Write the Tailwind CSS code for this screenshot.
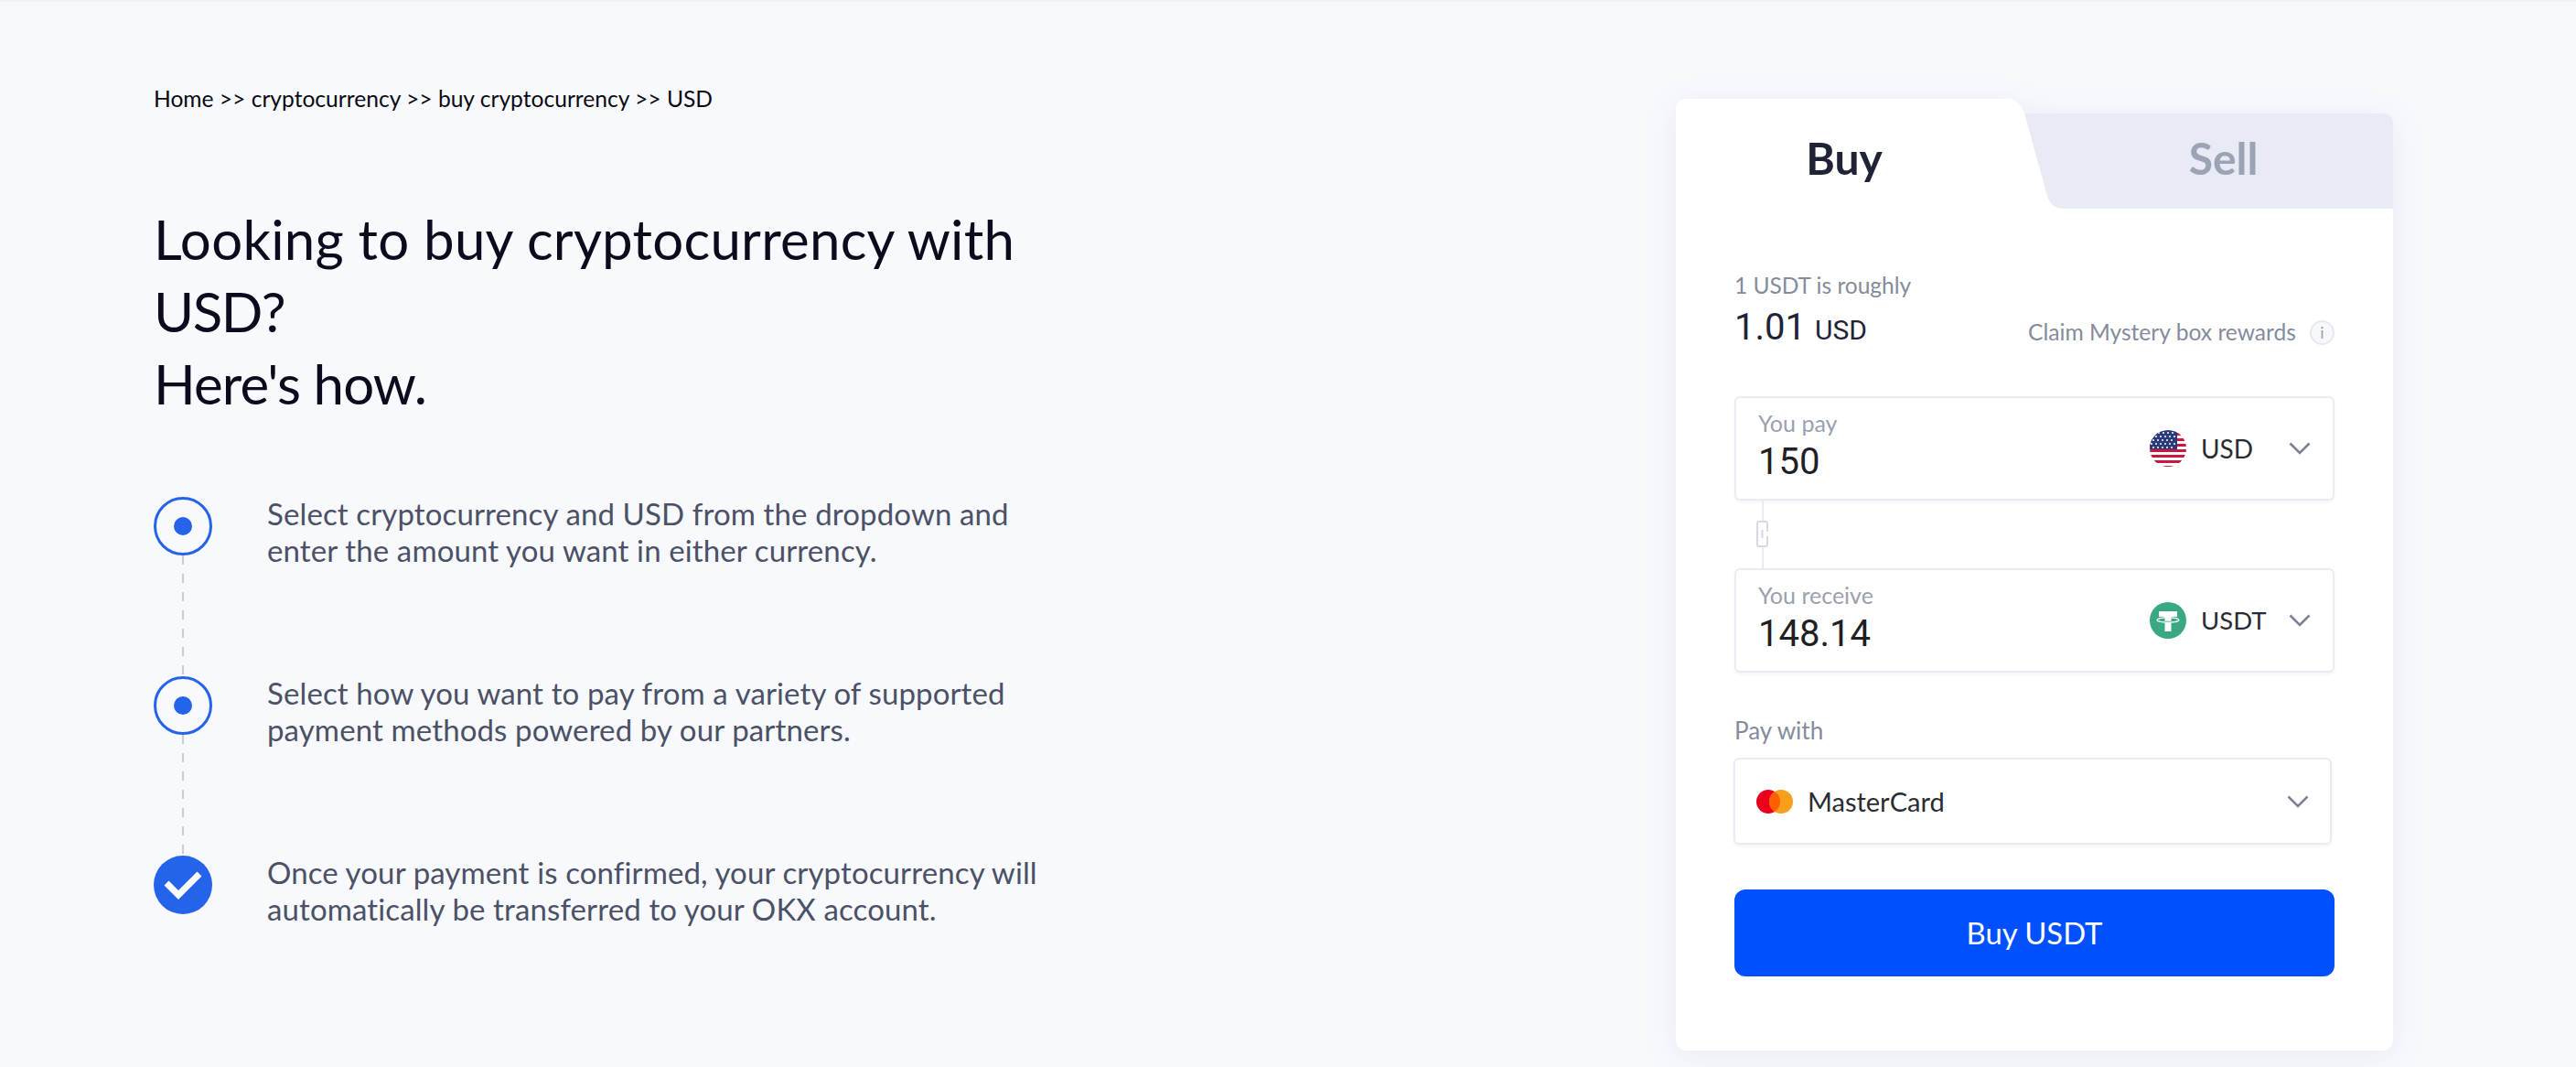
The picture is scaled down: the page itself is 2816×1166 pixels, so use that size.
<!DOCTYPE html>
<html lang="en">
<head>
<meta charset="utf-8">
<title>Buy USDT with USD</title>
<script src="https://cdn.jsdelivr.net/npm/@tailwindcss/browser@4"></script>
</head>
<body class="bg-[#f8f9fd] font-[Lato,sans-serif] overflow-hidden">
<div class="h-[1166px] w-[2816px] border-t-2 border-[#f1f2f6] flex pl-[168px] pt-[88px] overflow-hidden">
  <!-- Left column -->
  <div class="w-[1664px] shrink-0">
    <p class="text-[24.6px] leading-[32px] text-[#0a0a14] pt-[2px]">Home &gt;&gt; cryptocurrency &gt;&gt; buy cryptocurrency &gt;&gt; USD</p>
    <h1 class="mt-[98px] w-[1000px] text-[60px] tracking-[0.25px] leading-[79px] font-normal text-[#0b0b1e]">Looking to buy cryptocurrency with <span class="tracking-[-1.5px]">USD?</span><br><span class="tracking-[-0.9px]">Here's how.</span></h1>
    <ol class="mt-[84px]">
      <li class="flex gap-[60px] h-[196px]">
        <div class="w-[64px] flex flex-col items-center">
          <span class="w-[64px] h-[64px] shrink-0 rounded-full border-[3px] border-[#2563eb] flex items-center justify-center"><span class="w-[20px] h-[20px] rounded-full bg-[#2563eb]"></span></span>
          <span class="w-[2px] flex-1 bg-[repeating-linear-gradient(to_bottom,#cccccc_0,#cccccc_10px,transparent_10px,transparent_20px)]"></span>
        </div>
        <p class="w-[860px] -mt-[2px] text-[33px] tracking-[0.12px] leading-[40px] text-[#4b5166]">Select cryptocurrency and USD from the dropdown and enter the amount you want in either currency.</p>
      </li>
      <li class="flex gap-[60px] h-[196px]">
        <div class="w-[64px] flex flex-col items-center">
          <span class="w-[64px] h-[64px] shrink-0 rounded-full border-[3px] border-[#2563eb] flex items-center justify-center"><span class="w-[20px] h-[20px] rounded-full bg-[#2563eb]"></span></span>
          <span class="w-[2px] flex-1 bg-[repeating-linear-gradient(to_bottom,#cccccc_0,#cccccc_10px,transparent_10px,transparent_20px)]"></span>
        </div>
        <p class="w-[860px] -mt-[2px] text-[33px] tracking-[0.12px] leading-[40px] text-[#4b5166]">Select how you want to pay from a variety of supported payment methods powered by our partners.</p>
      </li>
      <li class="flex gap-[60px]">
        <div class="w-[64px] flex flex-col items-center">
          <span class="w-[64px] h-[64px] shrink-0 rounded-full bg-[#2563eb] flex items-center justify-center">
            <svg width="44" height="34" viewBox="0 0 44 34" fill="none"><path d="M4 15 L17 28 L40 5" stroke="#fff" stroke-width="7"/></svg>
          </span>
        </div>
        <p class="w-[860px] -mt-[2px] text-[33px] tracking-[0.12px] leading-[40px] text-[#4b5166]">Once your payment is confirmed, your cryptocurrency will automatically be transferred to your OKX account.</p>
      </li>
    </ol>
  </div>

  <!-- Card -->
  <div class="w-[784px] h-[1040px] shrink-0 mt-[18px] drop-shadow-[0_6px_18px_rgba(40,60,130,0.07)]">
    <div class="relative h-[120px] flex">
      <svg class="absolute inset-0" width="784" height="120" viewBox="0 0 784 120">
        <path d="M360 16 H772 Q784 16 784 28 V120 H400 Z" fill="#e8ebf3"/>
        <path d="M0 120 V12 Q0 0 12 0 H362 Q376 0 381 16 L406 106 Q410 120 424 120 Z" fill="#ffffff"/>
      </svg>
      <div class="relative w-[368px] flex items-center justify-center pt-[10px] text-[48px] font-bold text-[#1e2436]">Buy</div>
      <div class="relative flex-1 flex items-center justify-center pl-[45px] pt-[10px] text-[48px] font-bold text-[#9ca3b5]">Sell</div>
    </div>
    <div class="h-[920px] bg-white rounded-b-[12px] px-[64px] pt-[68px]">
      <p class="text-[24.5px] leading-[32px] text-[#848b9c]">1 USDT is roughly</p>
      <div class="mt-[8px] h-[44px] flex items-center justify-between">
        <p class="text-[#1e2436] leading-[44px] mt-[3px] flex items-baseline gap-[10px]"><span class="font-[Roboto,sans-serif] text-[40px]">1.01</span><span class="font-[Roboto,sans-serif] text-[30px]">USD</span></p>
        <div class="flex items-center gap-[15px] mt-[10px]">
          <span class="text-[24.6px] text-[#848b9c]">Claim Mystery box rewards</span>
          <span class="w-[27px] h-[27px] rounded-full border-2 border-[#e6e9f2] bg-[#f7f8fc] flex items-center justify-center text-[18px] leading-none text-[#9aa0af]">i</span>
        </div>
      </div>

      <div class="mt-[53px] h-[114px] border-2 border-[#e8ebf3] rounded-[6px] shadow-[0_2px_3px_rgba(40,60,130,0.06)] pl-[24px] pr-[24px] flex items-center justify-between">
        <div class="-mt-[4px]">
          <p class="text-[25px] leading-[32px] text-[#9aa0af] -mt-[3px]">You pay</p>
          <p class="font-[Roboto,sans-serif] text-[40px] leading-[44px] text-[#1f2024] mt-[5px]">150</p>
        </div>
        <div class="w-[176px] flex items-center">
          <svg class="shrink-0" width="40" height="40" viewBox="0 0 40 40">
            <defs><clipPath id="flagclip"><circle cx="20" cy="20" r="20"/></clipPath></defs>
            <g clip-path="url(#flagclip)">
              <rect width="40" height="40" fill="#ffffff"/>
              <rect y="3" width="40" height="3" fill="#c8183f"/>
              <rect y="9" width="40" height="3" fill="#c8183f"/>
              <rect y="15" width="40" height="3" fill="#c8183f"/>
              <rect y="21" width="40" height="3" fill="#c8183f"/>
              <rect y="27" width="40" height="3" fill="#c8183f"/>
              <rect y="33" width="40" height="3" fill="#c8183f"/>
              <rect y="39" width="40" height="3" fill="#c8183f"/>
              <rect width="30" height="21" fill="#2b3a78"/>
              <g fill="#ffffff">
                <circle cx="10" cy="3" r="1"/><circle cx="15" cy="3" r="1"/><circle cx="20" cy="3" r="1"/><circle cx="25" cy="3" r="1"/>
                <circle cx="7" cy="7" r="1"/><circle cx="12" cy="7" r="1"/><circle cx="17" cy="7" r="1"/><circle cx="22" cy="7" r="1"/><circle cx="27" cy="7" r="1"/>
                <circle cx="4" cy="11" r="1"/><circle cx="9" cy="11" r="1"/><circle cx="14" cy="11" r="1"/><circle cx="19" cy="11" r="1"/><circle cx="24" cy="11" r="1"/>
                <circle cx="2" cy="15" r="1"/><circle cx="7" cy="15" r="1"/><circle cx="12" cy="15" r="1"/><circle cx="17" cy="15" r="1"/><circle cx="22" cy="15" r="1"/><circle cx="27" cy="15" r="1"/>
                <circle cx="4" cy="19" r="1"/><circle cx="9" cy="19" r="1"/><circle cx="14" cy="19" r="1"/><circle cx="19" cy="19" r="1"/><circle cx="24" cy="19" r="1"/>
              </g>
            </g>
          </svg>
          <span class="ml-[16px] text-[28px] leading-none text-[#2a2c33]">USD</span>
          <svg class="ml-auto" width="24" height="14" viewBox="0 0 24 14" fill="none"><path d="M1.5 1.5 L12 12 L22.5 1.5" stroke="#7a8194" stroke-width="2.6"/></svg>
        </div>
      </div>

      <div class="relative h-[74px] pl-[30px]">
        <div class="w-[2px] h-full bg-[#e8ebf3]"></div>
        <svg class="absolute left-[24px] top-[22px]" width="13" height="29" viewBox="0 0 13 29" fill="none">
          <rect x="1" y="1" width="11" height="27" rx="2" fill="#fff" stroke="#d5d9e3" stroke-width="2"/>
          <path d="M6.5 10 V19" stroke="#d5d9e3" stroke-width="2"/>
          <path d="M12 12 V17" stroke="#fff" stroke-width="3"/>
        </svg>
      </div>

      <div class="h-[114px] border-2 border-[#e8ebf3] rounded-[6px] shadow-[0_2px_3px_rgba(40,60,130,0.06)] pl-[24px] pr-[24px] flex items-center justify-between">
        <div class="-mt-[4px]">
          <p class="text-[25px] leading-[32px] text-[#9aa0af] -mt-[3px]">You receive</p>
          <p class="font-[Roboto,sans-serif] text-[40px] leading-[44px] text-[#1f2024] mt-[5px]">148.14</p>
        </div>
        <div class="w-[176px] flex items-center">
          <svg class="shrink-0" width="40" height="40" viewBox="0 0 40 40">
            <circle cx="20" cy="20" r="20" fill="#3aa981"/>
            <path d="M10 10 H30 V16 H23.5 V32 H16.5 V16 H10 Z" fill="#fff"/>
            <ellipse cx="20" cy="19.5" rx="12" ry="2.6" fill="none" stroke="#fff" stroke-width="1.2"/>
            <path d="M16.5 21.2 H23.5" stroke="#3aa981" stroke-width="0.8"/>
          </svg>
          <span class="ml-[16px] text-[27.5px] leading-none text-[#2a2c33]">USDT</span>
          <svg class="ml-auto" width="24" height="14" viewBox="0 0 24 14" fill="none"><path d="M1.5 1.5 L12 12 L22.5 1.5" stroke="#7a8194" stroke-width="2.6"/></svg>
        </div>
      </div>

      <p class="mt-[47px] text-[26px] leading-[32px] text-[#848b9c]">Pay with</p>
      <div class="mt-[14px] -ml-px w-[654px] h-[95px] border-2 border-[#e8ebf3] rounded-[6px] shadow-[0_2px_3px_rgba(40,60,130,0.06)] pl-[23px] pr-[23px] flex items-center">
        <svg class="shrink-0" width="40" height="26" viewBox="0 0 40 26">
          <circle cx="13" cy="13" r="13" fill="#eb001b"/>
          <circle cx="27" cy="13" r="13" fill="#f79e1b"/>
          <path d="M20 2 A13 13 0 0 1 20 24 A13 13 0 0 1 20 2 Z" fill="#ff5f00"/>
        </svg>
        <span class="ml-[16px] text-[29px] leading-none text-[#2a2c33]">MasterCard</span>
        <svg class="ml-auto" width="24" height="14" viewBox="0 0 24 14" fill="none"><path d="M1.5 1.5 L12 12 L22.5 1.5" stroke="#7a8194" stroke-width="2.6"/></svg>
      </div>
      <button class="mt-[49px] w-full h-[95px] rounded-[12px] bg-[#0050ff] text-white text-[32.8px]">Buy USDT</button>
    </div>
  </div>
</div>
</body>
</html>
